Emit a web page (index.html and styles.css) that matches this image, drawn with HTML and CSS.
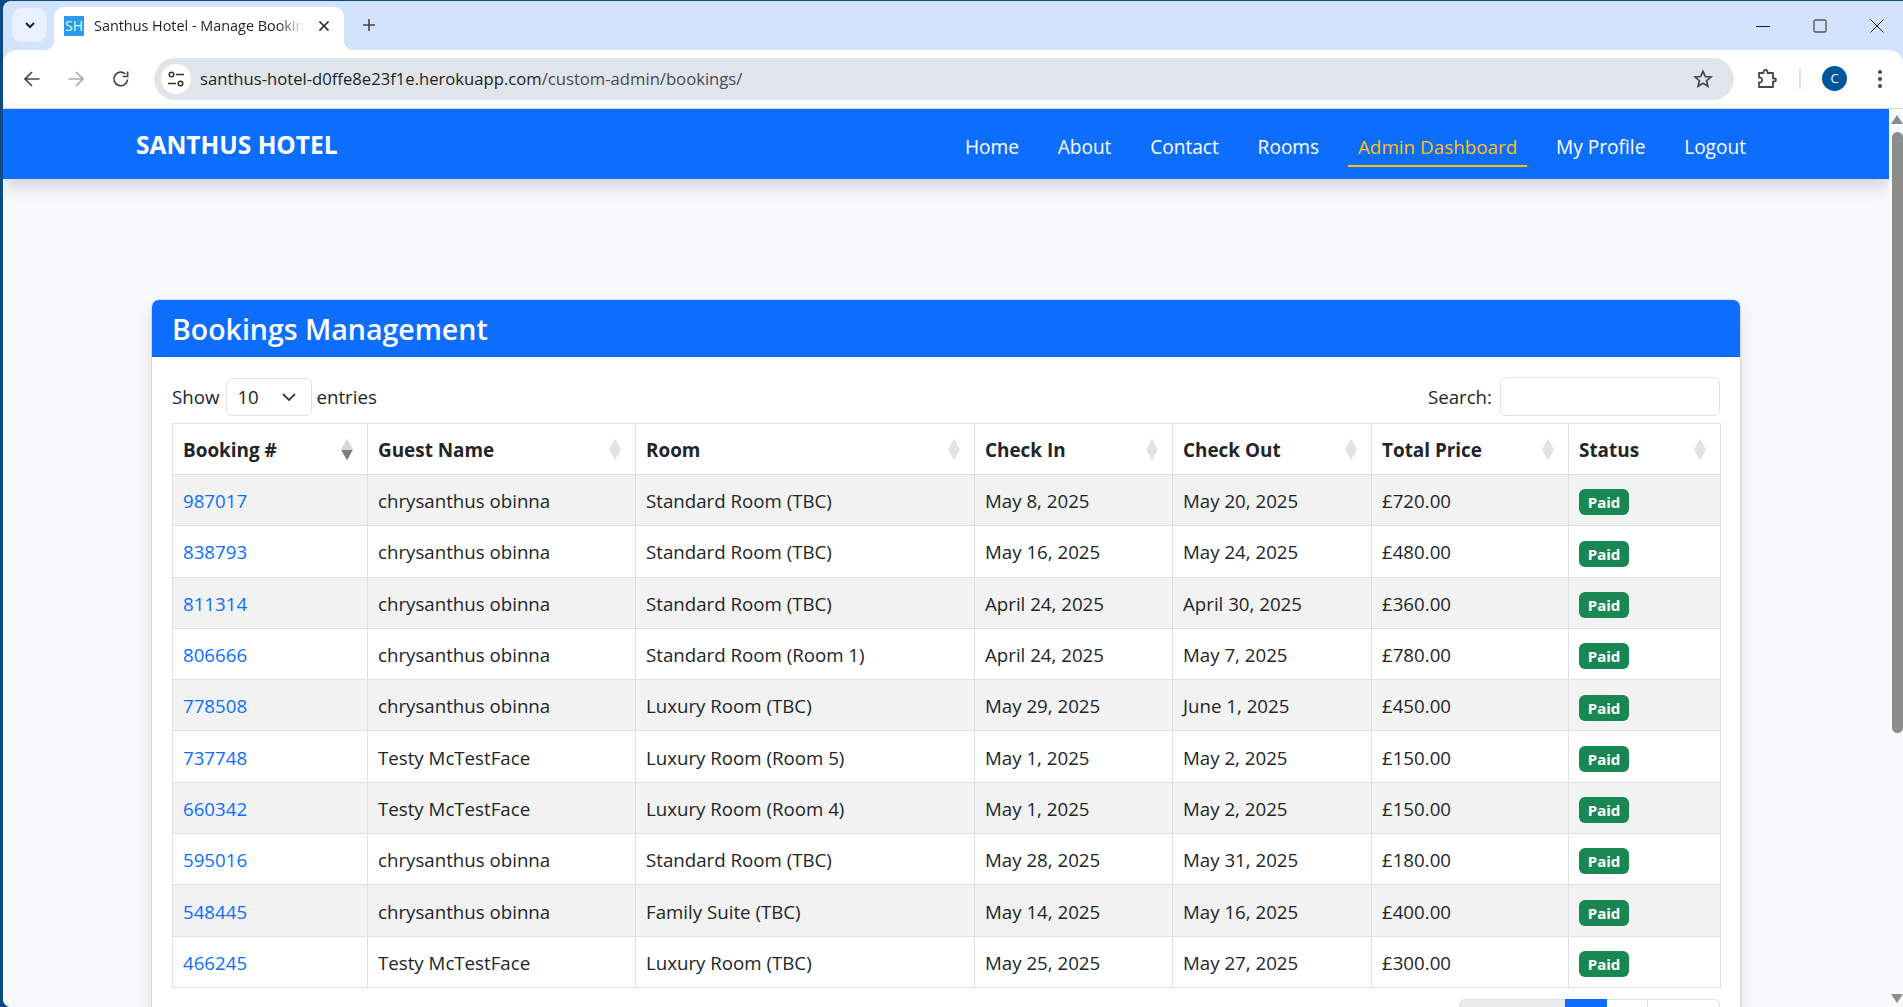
FILE: index.html
```html
<!DOCTYPE html>
<html lang="en">
  <head>
    <meta charset="UTF-8">
    <meta name="viewport" content="width=device-width, initial-scale=1.0">
    <title>Santhus Hotel - Manage Bookings</title>
    <link rel="stylesheet" href="styles.css">
  </head>
  <body>
    <div class="window">
      <!-- Browser tab strip -->
      <div class="tabstrip">
        <div class="tab-search">
          <svg width="14" height="14" viewBox="0 0 14 14"><path d="M3 5l4 4 4-4" fill="none" stroke="#1f1f1f" stroke-width="2"/></svg>
        </div>
        <div class="tab">
          <span class="favicon">SH</span>
          <span class="tab-title">Santhus Hotel - Manage Bookings</span>
          <svg class="tab-close" width="12" height="12" viewBox="0 0 12 12"><path d="M1.5 1.5l9 9M10.500 1.500l-9 9" stroke="#1f1f1f" stroke-width="1.6"/></svg>
        </div>
        <svg class="new-tab" width="14" height="14" viewBox="0 0 14 14"><path d="M7 1v12M1 7h12" stroke="#444" stroke-width="1.6"/></svg>
        <div class="window-controls">
          <svg width="14" height="14" viewBox="0 0 14 14"><path d="M0 7.500h14" stroke="#1f1f1f" stroke-width="1.2"/></svg>
          <svg width="14" height="14" viewBox="0 0 14 14"><rect x="1" y="1" width="12" height="12" rx="1.500" fill="none" stroke="#55595f" stroke-width="1.400"/></svg>
          <svg width="14" height="14" viewBox="0 0 14 14"><path d="M.5.5l13 13M13.500.5l-13 13" stroke="#1f1f1f" stroke-width="1"/></svg>
        </div>
      </div>

      <!-- Browser toolbar -->
      <div class="toolbar">
        <svg class="nav-icon" width="18" height="18" viewBox="0 0 18 18"><path d="M16.500 9H2M9 2L2 9l7 7" fill="none" stroke="#474747" stroke-width="1.700"/></svg>
        <svg class="nav-icon" width="18" height="18" viewBox="0 0 18 18"><path d="M1.500 9H16M9 2l7 7-7 7" fill="none" stroke="#aaa" stroke-width="1.700"/></svg>
        <svg class="nav-icon" width="18" height="18" viewBox="0 0 18 18"><path d="M15.500 9.500A6.800 6.800 0 1 1 13.400 4" fill="none" stroke="#474747" stroke-width="1.700"/><path d="M15.600 1.500v5h-5" fill="none" stroke="#474747" stroke-width="1.700"/></svg>
        <div class="address-bar">
          <span class="site-icon">
            <svg width="18" height="18" viewBox="0 0 18 18"><g fill="none" stroke="#333" stroke-width="1.500"><circle cx="4.500" cy="4.500" r="2.300"/><path d="M9 4.500h8M1 13.500h8"/><circle cx="13.500" cy="13.500" r="2.300"/></g></svg>
          </span>
          <span class="url">santhus-hotel-d0ffe8e23f1e.herokuapp.com<span class="url-path">/custom-admin/bookings/</span></span>
          <svg class="star" width="20" height="20" viewBox="0 0 20 20"><path d="M10 2.300l2.300 5.200 5.600.5-4.300 3.700 1.300 5.500-4.900-2.900-4.900 2.900 1.300-5.500L2.100 8l5.600-.5z" fill="none" stroke="#474747" stroke-width="1.700"/></svg>
        </div>
        <svg class="puzzle" width="22" height="22" viewBox="0 0 22 22"><path d="M3 5h4.500V4a2 2 0 0 1 4 0v1H17v5.500h1.500a1.500 1.500 0 0 1 0 3H17V19H3v-4.500h1.500a2.700 2.700 0 0 0 0-5H3z" fill="none" stroke="#474747" stroke-width="1.800" stroke-linejoin="round"/></svg>
        <span class="toolbar-sep"></span>
        <span class="avatar">C</span>
        <svg class="menu-dots" width="6" height="20" viewBox="0 0 6 20"><circle cx="3" cy="3" r="2" fill="#474747"/><circle cx="3" cy="10" r="2" fill="#474747"/><circle cx="3" cy="17" r="2" fill="#474747"/></svg>
      </div>

      <div class="viewport">
        <div class="page">
          <nav class="navbar">
            <a class="brand">SANTHUS HOTEL</a>
            <div class="nav-links">
              <a class="nav-link">Home</a>
              <a class="nav-link">About</a>
              <a class="nav-link">Contact</a>
              <a class="nav-link">Rooms</a>
              <a class="nav-link active">Admin Dashboard</a>
              <a class="nav-link">My Profile</a>
              <a class="nav-link">Logout</a>
            </div>
          </nav>

          <main class="content">
            <section class="card">
              <h1 class="card-header">Bookings Management</h1>
              <div class="card-body">
                <div class="table-controls">
                  <label class="length-label">Show
                    <span class="length-select">10
                      <svg width="16" height="16" viewBox="0 0 16 16"><path d="M2 5l6 6 6-6" fill="none" stroke="#343a40" stroke-width="1.800"/></svg>
                    </span>
                    entries</label>
                  <label class="search-label">Search: <span class="search-input"></span></label>
                </div>

                <table class="bookings">
                  <colgroup>
                    <col class="col-id"><col class="col-guest"><col class="col-room"><col class="col-in"><col class="col-out"><col class="col-price"><col class="col-status">
                  </colgroup>
                  <thead>
                    <tr>
                      <th><div class="th-inner">Booking #<span class="sort sorted"></span></div></th>
                      <th><div class="th-inner">Guest Name<span class="sort"></span></div></th>
                      <th><div class="th-inner">Room<span class="sort"></span></div></th>
                      <th><div class="th-inner">Check In<span class="sort"></span></div></th>
                      <th><div class="th-inner">Check Out<span class="sort"></span></div></th>
                      <th><div class="th-inner">Total Price<span class="sort"></span></div></th>
                      <th><div class="th-inner">Status<span class="sort"></span></div></th>
                    </tr>
                  </thead>
                  <tbody>
                    <tr><td><a class="booking-link">987017</a></td><td>chrysanthus obinna</td><td>Standard Room (TBC)</td><td>May 8, 2025</td><td>May 20, 2025</td><td>£720.00</td><td><span class="badge">Paid</span></td></tr>
                    <tr><td><a class="booking-link">838793</a></td><td>chrysanthus obinna</td><td>Standard Room (TBC)</td><td>May 16, 2025</td><td>May 24, 2025</td><td>£480.00</td><td><span class="badge">Paid</span></td></tr>
                    <tr><td><a class="booking-link">811314</a></td><td>chrysanthus obinna</td><td>Standard Room (TBC)</td><td>April 24, 2025</td><td>April 30, 2025</td><td>£360.00</td><td><span class="badge">Paid</span></td></tr>
                    <tr><td><a class="booking-link">806666</a></td><td>chrysanthus obinna</td><td>Standard Room (Room 1)</td><td>April 24, 2025</td><td>May 7, 2025</td><td>£780.00</td><td><span class="badge">Paid</span></td></tr>
                    <tr><td><a class="booking-link">778508</a></td><td>chrysanthus obinna</td><td>Luxury Room (TBC)</td><td>May 29, 2025</td><td>June 1, 2025</td><td>£450.00</td><td><span class="badge">Paid</span></td></tr>
                    <tr><td><a class="booking-link">737748</a></td><td>Testy McTestFace</td><td>Luxury Room (Room 5)</td><td>May 1, 2025</td><td>May 2, 2025</td><td>£150.00</td><td><span class="badge">Paid</span></td></tr>
                    <tr><td><a class="booking-link">660342</a></td><td>Testy McTestFace</td><td>Luxury Room (Room 4)</td><td>May 1, 2025</td><td>May 2, 2025</td><td>£150.00</td><td><span class="badge">Paid</span></td></tr>
                    <tr><td><a class="booking-link">595016</a></td><td>chrysanthus obinna</td><td>Standard Room (TBC)</td><td>May 28, 2025</td><td>May 31, 2025</td><td>£180.00</td><td><span class="badge">Paid</span></td></tr>
                    <tr><td><a class="booking-link">548445</a></td><td>chrysanthus obinna</td><td>Family Suite (TBC)</td><td>May 14, 2025</td><td>May 16, 2025</td><td>£400.00</td><td><span class="badge">Paid</span></td></tr>
                    <tr><td><a class="booking-link">466245</a></td><td>Testy McTestFace</td><td>Luxury Room (TBC)</td><td>May 25, 2025</td><td>May 27, 2025</td><td>£300.00</td><td><span class="badge">Paid</span></td></tr>
                  </tbody>
                </table>

                <div class="pagination">
                  <span class="page-btn page-prev">Previous</span>
                  <span class="page-btn page-current">1</span>
                  <span class="page-btn page-two">2</span>
                  <span class="page-btn page-next">Next</span>
                </div>
              </div>
            </section>
          </main>
        </div>

        <div class="scrollbar">
          <span class="scroll-up"></span>
          <span class="scroll-thumb"></span>
          <span class="scroll-down"></span>
        </div>
      </div>
    </div>
  </body>
</html>
```

FILE: styles.css
```css
html, body {
    height: 100%;
    margin: 0;
    overflow: hidden;
}
body {
    background-color: #0b4a86;
    font-family: "Open Sans", "Noto Sans", sans-serif;
    color: #212529;
}
.window {
    height: 1006px;
    margin: 1px 0 0 3px;
    display: flex;
    flex-direction: column;
    background-color: #d3e3fd;
    border-radius: 8px 0 0 8px;
    overflow: hidden;
}

/* tab strip */
.tabstrip {
    height: 49px;
    flex: none;
    display: flex;
    align-items: flex-end;
    padding-left: 9px;
}
.tab-search {
    width: 35px;
    height: 34px;
    margin-bottom: 8px;
    display: flex;
    align-items: center;
    justify-content: center;
    background-color: #e9f0fe;
    border-radius: 10px;
}
.tab {
    width: 290px;
    height: 43px;
    margin-left: 7px;
    padding: 0 14px 6px 10px;
    box-sizing: border-box;
    display: flex;
    align-items: center;
    background-color: #fff;
    border-radius: 10px 10px 0 0;
    position: relative;
}
.tab::before, .tab::after {
    content: "";
    position: absolute;
    bottom: 0;
    width: 10px;
    height: 10px;
}
.tab::before {
    left: -10px;
    background: radial-gradient(circle at 0 0, transparent 10px, #fff 10.500px);
}
.tab::after {
    right: -10px;
    background: radial-gradient(circle at 100% 0, transparent 10px, #fff 10.500px);
}
.favicon {
    width: 20px;
    height: 20px;
    flex: none;
    background-color: #2b9be8;
    color: #eaf6ff;
    font-size: 14px;
    line-height: 20px;
    text-align: center;
}
.tab-title {
    width: 210px;
    margin-left: 10px;
    overflow: hidden;
    white-space: nowrap;
    font-size: 14.400px;
    color: #1f1f1f;
    -webkit-mask-image: linear-gradient(to right, #000 88%, transparent);
    mask-image: linear-gradient(to right, #000 88%, transparent);
}
.tab-close {
    margin-left: 14px;
    flex: none;
}
.new-tab {
    margin: 0 0 18px 18px;
}
.window-controls {
    margin-left: auto;
    margin-bottom: 17px;
    padding-right: 19px;
    display: flex;
    gap: 43px;
}

/* toolbar */
.toolbar {
    height: 59px;
    flex: none;
    box-sizing: border-box;
    display: flex;
    align-items: center;
    padding: 0 15px 1px 20px;
    background-color: #fff;
    border-radius: 14px 14px 0 0;
    border-bottom: 1px solid #d5d9df;
}
.nav-icon {
    margin-right: 27px;
    flex: none;
}
.nav-icon:nth-child(1) {
    margin-right: 26px;
}
.nav-icon:nth-child(3) {
    margin-right: 24px;
}
.address-bar {
    width: 1580px;
    height: 42px;
    flex: none;
    display: flex;
    align-items: center;
    padding: 0 21px 0 7px;
    box-sizing: border-box;
    background-color: #e0e5ec;
    border-radius: 21px;
}
.site-icon {
    width: 30px;
    height: 30px;
    flex: none;
    display: flex;
    align-items: center;
    justify-content: center;
    background-color: #fff;
    border-radius: 50%;
}
.url {
    margin-left: 9px;
    font-size: 16.650px;
    color: #1f1f1f;
    white-space: nowrap;
}
.url-path {
    color: #474a4f;
}
.star {
    margin-left: auto;
    flex: none;
}
.puzzle {
    margin-left: 22px;
    flex: none;
}
.toolbar-sep {
    width: 2px;
    height: 20px;
    margin-left: 21px;
    background-color: #d3e3fd;
}
.avatar {
    width: 25px;
    height: 25px;
    margin-left: 21px;
    flex: none;
    background-color: #00569b;
    color: #fff;
    border-radius: 50%;
    font-size: 13px;
    line-height: 25px;
    text-align: center;
}
.menu-dots {
    margin-left: 30px;
    flex: none;
}

/* page area */
.viewport {
    flex: 1;
    min-height: 0;
    display: flex;
}
.page {
    flex: 1;
    min-width: 0;
    background-color: #f8f9fa;
    overflow: hidden;
}
.navbar {
    height: 70px;
    padding: 0 133px;
    display: flex;
    align-items: center;
    justify-content: space-between;
    background-color: #0d6efd;
    box-shadow: 0 8px 16px rgba(0, 0, 0, 0.15);
    position: relative;
}
.brand {
    font-size: 24.500px;
    font-weight: 700;
    color: #fff;
}
.nav-links {
    display: flex;
    gap: 18.800px;
}
.nav-link {
    padding: 13px 10px 4px;
    font-size: 19.100px;
    line-height: 27px;
    color: #fff;
    border-bottom: 2px solid transparent;
}
.nav-link.active {
    font-size: 18.850px;
    color: #ffc107;
    border-bottom-color: #ffc107;
}
.content {
    padding: 121px 149px 0;
}

/* card */
.card {
    background-color: #fff;
    border-radius: 7px;
    box-shadow: 0 0 1px 1px rgba(0, 0, 0, 0.1), 0 8px 20px rgba(0, 0, 0, 0.1);
}
.card-header {
    height: 57px;
    margin: 0;
    padding: 0 20px;
    box-sizing: border-box;
    background-color: #0d6efd;
    border-bottom: 1px solid #0b5ed7;
    border-radius: 7px 7px 0 0;
    color: #fff;
    font-size: 28.500px;
    font-weight: 600;
    line-height: 59px;
}
.card-body {
    padding: 20px 20px 20px;
}
.table-controls {
    display: flex;
    justify-content: space-between;
    align-items: center;
    height: 39px;
    margin-bottom: 7px;
    font-size: 18.700px;
}
.length-label, .search-label {
    display: flex;
    align-items: center;
    gap: 8px;
}
.length-label {
    gap: 5px;
}
.length-select {
    width: 86px;
    height: 38px;
    margin: 0 -1px 0 2px;
    box-sizing: border-box;
    padding: 0 14px 0 10px;
    display: flex;
    align-items: center;
    justify-content: space-between;
    border: 1px solid #dee2e6;
    border-radius: 6px;
}
.search-input {
    width: 220px;
    height: 39px;
    box-sizing: border-box;
    border: 1px solid #dee2e6;
    border-radius: 6px;
}

/* table */
.bookings {
    width: 1548px;
    table-layout: fixed;
    border-collapse: collapse;
    font-size: 18.700px;
}
.col-id { width: 195px; }
.col-guest { width: 268px; }
.col-room { width: 339px; }
.col-in { width: 198px; }
.col-out { width: 199px; }
.col-price { width: 197px; }
.col-status { width: 152px; }
.bookings th, .bookings td {
    border: 1px solid #dee2e6;
    padding: 0 10px;
    text-align: left;
}
.bookings th {
    height: 49px;
    padding-top: 1px;
    font-size: 18.900px;
    font-weight: 700;
}
.bookings td {
    height: 49.300px;
    padding-top: 1px;
}
.bookings tbody tr:nth-child(odd) td {
    background-color: #f2f2f2;
}
.th-inner {
    display: flex;
    align-items: center;
    justify-content: space-between;
    padding-right: 4px;
}
.sort {
    width: 12px;
    height: 22px;
    flex: none;
    background-color: #e2e3e3;
    clip-path: polygon(50% 0, 100% 50%, 50% 100%, 0 50%);
}
.sort.sorted {
    background: linear-gradient(#d8d8d8 50%, #7f7f7f 50%);
}
.booking-link {
    color: #0d6efd;
}
.badge {
    display: inline-block;
    width: 50px;
    height: 26px;
    margin-top: 3px;
    background-color: #198754;
    color: #fff;
    border-radius: 6px;
    font-size: 15px;
    font-weight: 700;
    line-height: 26px;
    text-align: center;
    vertical-align: middle;
}

/* pagination, runs under the fold */
.pagination {
    display: flex;
    justify-content: flex-end;
    margin-top: 11px;
    font-size: 18.700px;
}
.page-btn {
    height: 46px;
    box-sizing: border-box;
    border: 1px solid #dee2e6;
    border-left: 0;
    display: flex;
    align-items: center;
    justify-content: center;
}
.page-prev {
    width: 106px;
    border-left: 1px solid #dee2e6;
    border-radius: 6px 0 0 6px;
    background-color: #e9ecef;
    color: #6c757d;
}
.page-current {
    width: 42px;
    background-color: #0d6efd;
    border-color: #0d6efd;
    color: #fff;
}
.page-two {
    width: 41px;
    color: #0d6efd;
}
.page-next {
    width: 72px;
    border-radius: 0 6px 6px 0;
    color: #0d6efd;
}

/* page scrollbar */
.scrollbar {
    width: 14px;
    flex: none;
    display: flex;
    flex-direction: column;
    align-items: flex-end;
    background-color: #f8f9fb;
    position: relative;
}
.scroll-up, .scroll-down {
    position: absolute;
    right: 0;
    width: 0;
    height: 0;
    border-left: 6px solid transparent;
    border-right: 6px solid transparent;
}
.scroll-up {
    top: 6px;
    border-bottom: 9px solid #8c8c8c;
}
.scroll-down {
    bottom: 4px;
    border-top: 9px solid #8c8c8c;
}
.scroll-thumb {
    width: 11px;
    height: 601px;
    margin-top: 23px;
    background-color: #8c8c8c;
    border-radius: 6px;
}
```
